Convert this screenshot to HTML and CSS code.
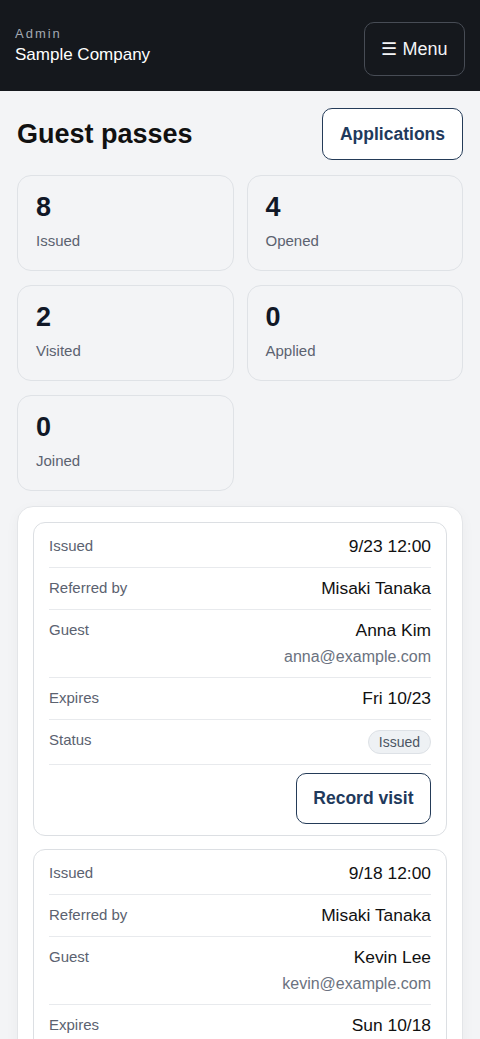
FILE: index.html
```html
<!DOCTYPE html>
<html lang="en">
<head>
    <meta charset="UTF-8">
    <meta name="viewport" content="width=device-width, initial-scale=1.0">
    <title>Guest passes</title>
    <link rel="stylesheet" href="styles.css">
</head>
<body>

    <header class="topbar">
        <div class="brand">
            <div class="brand-role">Admin</div>
            <div class="brand-name">Sample Company</div>
        </div>
        <button class="menu-btn">☰ Menu</button>
    </header>

    <main class="page">
        <div class="page-head">
            <h1>Guest passes</h1>
            <button class="btn-outline">Applications</button>
        </div>

        <!-- Stats -->
        <div class="stats">
            <div class="stat"><div class="stat-num">8</div><div class="stat-label">Issued</div></div>
            <div class="stat"><div class="stat-num">4</div><div class="stat-label">Opened</div></div>
            <div class="stat"><div class="stat-num">2</div><div class="stat-label">Visited</div></div>
            <div class="stat"><div class="stat-num">0</div><div class="stat-label">Applied</div></div>
            <div class="stat"><div class="stat-num">0</div><div class="stat-label">Joined</div></div>
        </div>

        <!-- Pass list -->
        <div class="panel">
            <div class="pass">
                <div class="row">
                    <span class="label">Issued</span>
                    <span class="value">9/23 12:00</span>
                </div>
                <div class="row">
                    <span class="label">Referred by</span>
                    <span class="value">Misaki Tanaka</span>
                </div>
                <div class="row">
                    <span class="label">Guest</span>
                    <span class="value">Anna Kim<span class="sub">anna@example.com</span></span>
                </div>
                <div class="row">
                    <span class="label">Expires</span>
                    <span class="value">Fri 10/23</span>
                </div>
                <div class="row">
                    <span class="label">Status</span>
                    <span class="badge">Issued</span>
                </div>
                <div class="actions">
                    <button class="btn-outline">Record visit</button>
                </div>
            </div>

            <div class="pass">
                <div class="row">
                    <span class="label">Issued</span>
                    <span class="value">9/18 12:00</span>
                </div>
                <div class="row">
                    <span class="label">Referred by</span>
                    <span class="value">Misaki Tanaka</span>
                </div>
                <div class="row">
                    <span class="label">Guest</span>
                    <span class="value">Kevin Lee<span class="sub">kevin@example.com</span></span>
                </div>
                <div class="row">
                    <span class="label">Expires</span>
                    <span class="value">Sun 10/18</span>
                </div>
                <div class="row">
                    <span class="label">Status</span>
                    <span class="badge">Opened</span>
                </div>
                <div class="actions">
                    <button class="btn-outline">Record visit</button>
                </div>
            </div>
        </div>
    </main>

</body>
</html>
```

FILE: styles.css
```css
body {
    font-family: "Liberation Sans", Arial, sans-serif;
    background-color: #f3f4f6;
    color: #111827;
    margin: 0;
}

button {
    font-family: inherit;
    cursor: pointer;
}

.topbar {
    background: #15181d;
    color: white;
    display: flex;
    justify-content: space-between;
    align-items: flex-start;
    padding: 22px 15px 15px;
}

.brand {
    padding-top: 4px;
}

.brand-role {
    font-size: 13px;
    line-height: 16px;
    letter-spacing: 2px;
    color: #a3a9b2;
}

.brand-name {
    font-size: 17px;
    line-height: 22px;
    margin-top: 2px;
}

.menu-btn {
    width: 101px;
    height: 54px;
    background: transparent;
    color: #f3f4f6;
    border: 1px solid #474c55;
    border-radius: 10px;
    font-size: 18px;
}

.page {
    padding: 17px 17px 40px;
}

.page-head {
    display: flex;
    justify-content: space-between;
    align-items: center;
}

h1 {
    font-size: 27px;
    margin: 0;
    color: #111;
}

.btn-outline {
    background: white;
    color: #1f3a5c;
    border: 1.5px solid #243b58;
    border-radius: 10px;
    font-size: 17.5px;
    font-weight: bold;
    height: 52px;
    padding: 0 17px;
}

.stats {
    display: grid;
    grid-template-columns: 1fr 1fr;
    column-gap: 13px;
    row-gap: 14px;
    margin-top: 15px;
}

.stat {
    border: 1px solid #dfe2e6;
    border-radius: 14px;
    padding: 16px 18px 19px;
    box-sizing: border-box;
    height: 96px;
}

.stat-num {
    font-size: 27px;
    font-weight: bold;
    line-height: 31px;
}

.stat-label {
    font-size: 15px;
    line-height: 20px;
    color: #5b6270;
    margin-top: 8px;
}

.panel {
    margin-top: 15px;
    background: white;
    border: 1px solid #e3e5e8;
    border-radius: 16px;
    padding: 15px 15px;
    box-shadow: 0px 4px 14px rgba(0, 0, 0, 0.04);
    display: flex;
    flex-direction: column;
    gap: 13px;
}

.pass {
    border: 1px solid #dcdfe3;
    border-radius: 12px;
    padding: 3px 15px 11px;
}

.row {
    display: flex;
    justify-content: space-between;
    align-items: flex-start;
    padding: 10px 0;
    border-bottom: 1px solid #e8eaed;
}

.label {
    font-size: 15px;
    line-height: 20px;
    color: #5b6270;
}

.value {
    font-size: 17.4px;
    line-height: 21px;
    text-align: right;
    color: #111;
}

.sub {
    display: block;
    font-size: 16px;
    line-height: 20px;
    color: #6b7280;
    margin-top: 6px;
}

.badge {
    font-size: 14px;
    line-height: 22px;
    padding: 0 10px;
    color: #4b5563;
    background: #eef1f4;
    border: 1px solid #dde1e6;
    border-radius: 12px;
}

.actions {
    display: flex;
    justify-content: flex-end;
    padding-top: 8px;
}

.actions .btn-outline {
    height: 51px;
    padding: 0 16.5px;
}
```
